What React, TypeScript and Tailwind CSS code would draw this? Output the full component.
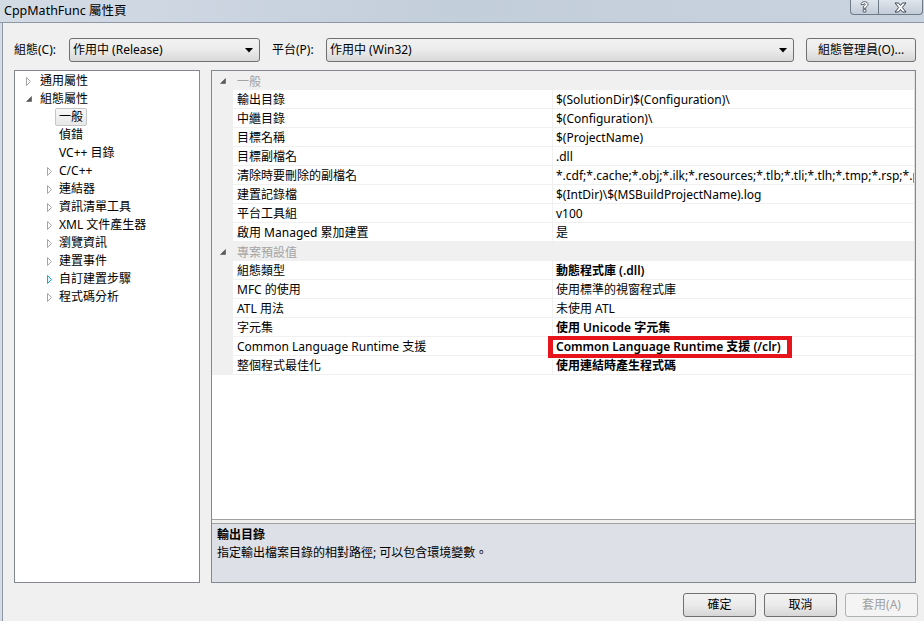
import React from "react";

// 樹狀節點的三角形
function Collapsed({ hot }: { hot?: boolean }) {
  return (
    <svg width="6" height="9" viewBox="0 0 6 9">
      <path
        d="M0.5 0.5 L4.5 4.5 L0.5 8.5 Z"
        fill={hot ? "#dff5ff" : "#ffffff"}
        stroke={hot ? "#1ba6e8" : "#a6a6a6"}
      />
    </svg>
  );
}

function Expanded() {
  return (
    <svg width="6" height="6" viewBox="0 0 6 6">
      <path d="M5.5 0.5 L5.5 5.5 L0.5 5.5 Z" fill="#595959" stroke="#595959" strokeWidth="0.6" />
    </svg>
  );
}

function ComboArrow() {
  return (
    <svg width="8" height="5" viewBox="0 0 8 5">
      <path d="M0 0 L8 0 L4 4.5 Z" fill="#000" />
    </svg>
  );
}

type TreeNode = { text: string; level: number; kind: "open" | "closed" | "leaf"; selected?: boolean; hot?: boolean };

const tree: TreeNode[] = [
  { text: "通用屬性", level: 0, kind: "closed" },
  { text: "組態屬性", level: 0, kind: "open" },
  { text: "一般", level: 1, kind: "leaf", selected: true },
  { text: "偵錯", level: 1, kind: "leaf" },
  { text: "VC++ 目錄", level: 1, kind: "leaf" },
  { text: "C/C++", level: 1, kind: "closed" },
  { text: "連結器", level: 1, kind: "closed" },
  { text: "資訊清單工具", level: 1, kind: "closed" },
  { text: "XML 文件產生器", level: 1, kind: "closed" },
  { text: "瀏覽資訊", level: 1, kind: "closed" },
  { text: "建置事件", level: 1, kind: "closed" },
  { text: "自訂建置步驟", level: 1, kind: "closed", hot: true },
  { text: "程式碼分析", level: 1, kind: "closed" },
];

type Prop = { label: string; value: string; bold?: boolean; mark?: boolean };

const general: Prop[] = [
  { label: "輸出目錄", value: "$(SolutionDir)$(Configuration)\\" },
  { label: "中繼目錄", value: "$(Configuration)\\" },
  { label: "目標名稱", value: "$(ProjectName)" },
  { label: "目標副檔名", value: ".dll" },
  {
    label: "清除時要刪除的副檔名",
    value: "*.cdf;*.cache;*.obj;*.ilk;*.resources;*.tlb;*.tli;*.tlh;*.tmp;*.rsp;*.pgc;*.pgd;*.meta;$(TargetPath)",
  },
  { label: "建置記錄檔", value: "$(IntDir)\\$(MSBuildProjectName).log" },
  { label: "平台工具組", value: "v100" },
  { label: "啟用 Managed 累加建置", value: "是" },
];

const defaults: Prop[] = [
  { label: "組態類型", value: "動態程式庫 (.dll)", bold: true },
  { label: "MFC 的使用", value: "使用標準的視窗程式庫" },
  { label: "ATL 用法", value: "未使用 ATL" },
  { label: "字元集", value: "使用 Unicode 字元集", bold: true },
  { label: "Common Language Runtime 支援", value: "Common Language Runtime 支援 (/clr)", bold: true, mark: true },
  { label: "整個程式最佳化", value: "使用連結時產生程式碼", bold: true },
];

function Category({ text }: { text: string }) {
  return (
    <div className="flex h-[19px] items-center bg-[#f0f0f0]">
      <div className="w-[25px] pl-[8px] flex items-center">
        <Expanded />
      </div>
      <span className="text-[#a3a3a3] leading-[19px] pt-[1px]">{text}</span>
    </div>
  );
}

function PropRow({ p }: { p: Prop }) {
  return (
    <div className="flex h-[19px] border-b border-[#f0f0f0]">
      <div className="w-[21px] bg-[#f0f0f0]" />
      <div className="w-[320px] border-r border-[#f0f0f0] pl-[4px] pt-[1px] leading-[17px] whitespace-nowrap overflow-hidden">
        {p.label}
      </div>
      <div className="relative flex-1 min-w-0">
        <div
          className={`pl-[3px] pt-[1px] leading-[17px] whitespace-nowrap overflow-hidden ${
            p.bold ? "font-semibold" : ""
          }`}
        >
          {p.value}
        </div>
        {p.mark && (
          <div className="absolute left-[-5px] top-[-1px] w-[244px] h-[22px] border-y-4 border-x-[5px] border-[#e8141c]" />
        )}
      </div>
    </div>
  );
}

function WinButton({ children, disabled, w = "w-[73px]" }: { children: React.ReactNode; disabled?: boolean; w?: string }) {
  return (
    <button
      className={`${w} h-[24px] rounded-[3px] border ${
        disabled
          ? "border-[#adb2b5] bg-[#f4f4f4] text-[#a0a0a0]"
          : "border-[#707070] bg-gradient-to-b from-[#f2f2f2] via-[#ebebeb] to-[#d6d6d6] text-black"
      } text-[12px] leading-none`}
    >
      {children}
    </button>
  );
}

export default function App() {
  return (
    <div className="w-[924px] h-[621px] overflow-hidden flex flex-col bg-gradient-to-r from-[#d3dbe5] via-[#c3cedb] to-[#c9d3df] font-['Noto_Sans','Noto_Sans_CJK_TC',sans-serif] text-[12px] text-black">
      {/* 標題列 */}
      <div className="h-[23px] flex items-start justify-between border-b border-[#8d98a6]">
        <span className="pl-[4px] pt-[3px] text-[12.5px] leading-[16px]">CppMathFunc 屬性頁</span>
        <div className="flex mr-[1px]">
          <div className="w-[29px] h-[15px] border border-t-0 border-[#6f7a87] rounded-bl-[4px] bg-gradient-to-b from-[#dfe5ec] to-[#c2ccd8] flex items-center justify-center">
            <svg width="9" height="12" viewBox="0 0 9 12">
              <path
                d="M1 3.5 C1 1.5 2.6 0.7 4.5 0.7 C6.6 0.7 8 1.8 8 3.4 C8 5 6.4 5.6 5.8 6.3 L5.8 7.3 L3.3 7.3 L3.3 5.9 C3.3 4.7 5.3 4.3 5.3 3.4 C5.3 2.8 4.9 2.6 4.4 2.6 C3.8 2.6 3.5 3 3.5 3.6 Z M3.2 8.4 L5.9 8.4 L5.9 11 L3.2 11 Z"
                fill="#ffffff"
                stroke="#3b4450"
                strokeWidth="0.8"
                strokeLinejoin="round"
              />
            </svg>
          </div>
          <div className="w-[44px] h-[15px] border border-l-0 border-t-0 border-[#6f7a87] rounded-br-[4px] bg-gradient-to-b from-[#dfe5ec] to-[#c2ccd8] flex items-center justify-center">
            <svg width="13" height="11" viewBox="0 0 13 11">
              <path
                d="M1 1 L4.5 1 L6.5 3.5 L8.5 1 L12 1 L8.3 5.5 L12 10 L8.5 10 L6.5 7.5 L4.5 10 L1 10 L4.7 5.5 Z"
                fill="#ffffff"
                stroke="#3b4450"
                strokeWidth="1"
                strokeLinejoin="round"
              />
            </svg>
          </div>
        </div>
      </div>

      {/* 本體 */}
      <div className="flex-1 ml-[2px] border-l border-[#8d98a6] bg-[#f0f0f0] flex flex-col pl-[11px] pr-[6px]">
        {/* 組態 / 平台 */}
        <div className="flex items-center mt-[15px] h-[24px]">
          <span className="w-[55px]">組態(C):</span>
          <div className="w-[191px] h-[24px] rounded-[3px] border border-[#707070] bg-gradient-to-b from-[#f2f2f2] via-[#ebebeb] to-[#d8d8d8] flex items-center justify-between pl-[3px] pr-[6px]">
            <span>作用中 (Release)</span>
            <ComboArrow />
          </div>
          <span className="w-[54px] ml-[12px]">平台(P):</span>
          <div className="w-[468px] h-[24px] rounded-[3px] border border-[#707070] bg-gradient-to-b from-[#f2f2f2] via-[#ebebeb] to-[#d8d8d8] flex items-center justify-between pl-[3px] pr-[6px]">
            <span>作用中 (Win32)</span>
            <ComboArrow />
          </div>
          <div className="ml-[12px]">
            <WinButton w="w-[110px]">組態管理員(O)...</WinButton>
          </div>
        </div>

        {/* 樹狀 + 屬性格 */}
        <div className="flex mt-[8px] h-[513px] gap-[11px]">
          <div className="w-[186px] border border-[#828790] bg-white pt-[1px]">
            {tree.map((n) => (
              <div key={n.text} className="h-[18px] flex items-center">
                <div
                  className={`flex items-center justify-start ${
                    n.level === 0 ? "w-[25px] pl-[11px]" : "w-[44px] pl-[32px]"
                  }`}
                >
                  {n.kind === "closed" && <Collapsed hot={n.hot} />}
                  {n.kind === "open" && <Expanded />}
                </div>
                {n.selected ? (
                  <span className="-ml-[4px] px-[3px] h-[18px] leading-[16px] border border-[#c6c6c6] rounded-[2px] bg-gradient-to-b from-[#f7f7f7] to-[#e8e8e8]">
                    {n.text}
                  </span>
                ) : (
                  <span className="leading-[18px]">{n.text}</span>
                )}
              </div>
            ))}
          </div>

          <div className="w-[705px] border border-[#828790] flex flex-col bg-[#f0f0f0]">
            <div className="h-[448px] bg-white border-r border-[#e0e0e0]">
              <Category text="一般" />
              {general.map((p) => (
                <PropRow key={p.label} p={p} />
              ))}
              <Category text="專案預設值" />
              {defaults.map((p) => (
                <PropRow key={p.label} p={p} />
              ))}
            </div>
            <div className="h-[1px] bg-[#a0a0a0]" />
            <div className="h-[3px]" />
            <div className="flex-1 border-t border-[#a0a0a0] bg-[#dde0e7] pl-[5px] pt-[2px]">
              <div className="font-semibold leading-[18px]">輸出目錄</div>
              <div className="leading-[18px]">指定輸出檔案目錄的相對路徑; 可以包含環境變數。</div>
            </div>
          </div>
        </div>

        {/* 按鈕 */}
        <div className="flex justify-end gap-[8px] mt-[10px]">
          <WinButton>確定</WinButton>
          <WinButton>取消</WinButton>
          <WinButton disabled>套用(A)</WinButton>
        </div>
      </div>
    </div>
  );
}
